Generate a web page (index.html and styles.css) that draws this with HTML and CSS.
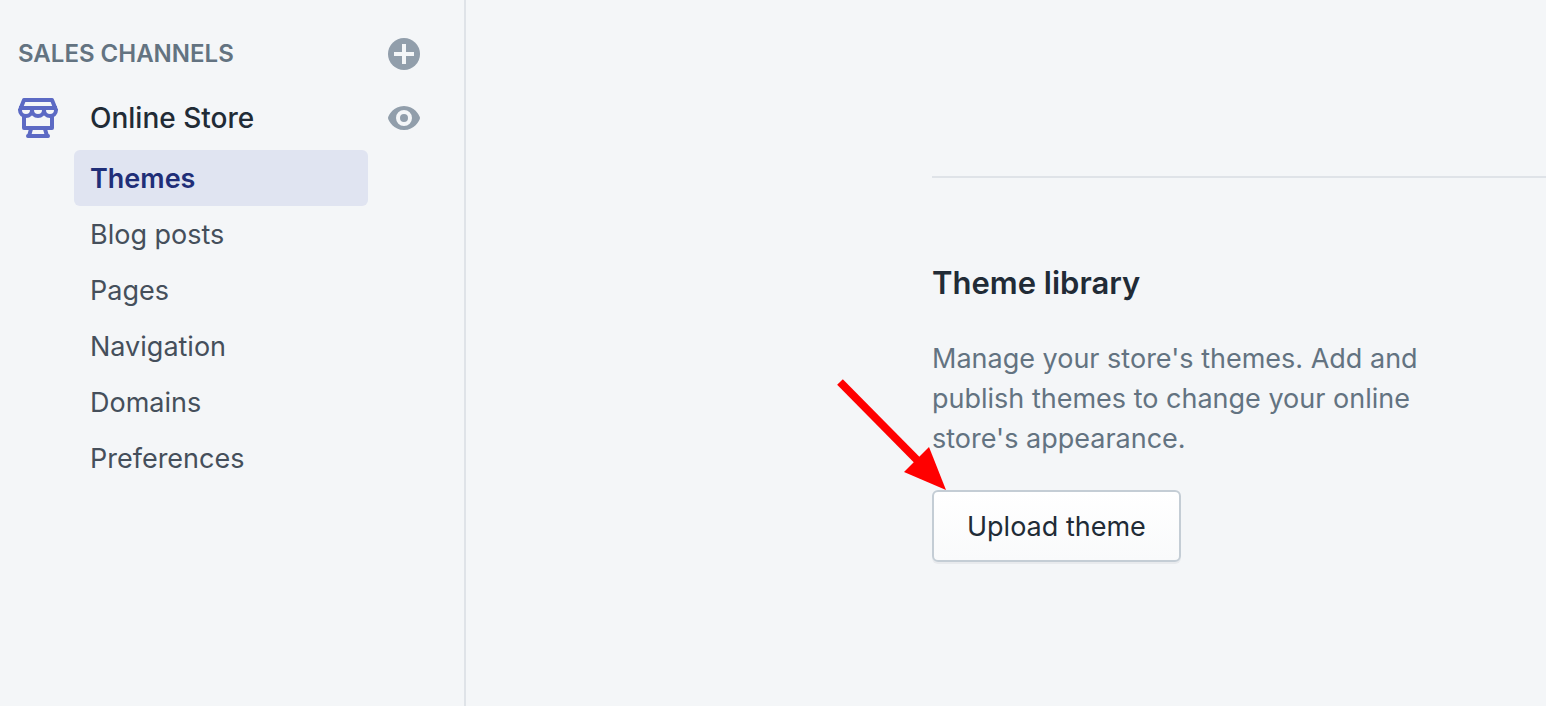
FILE: index.html
```html
<!DOCTYPE html>
<html lang="en">
<head>
  <meta charset="utf-8">
  <meta name="viewport" content="width=device-width, initial-scale=1">
  <title>Themes</title>
  <link rel="stylesheet" href="styles.css">
</head>
<body>
  <div class="app">
    <nav class="sidebar" aria-label="Sales channels">
      <div class="sidebar-header">
        <h2 class="sidebar-title">SALES CHANNELS</h2>
        <button class="icon-button" type="button" aria-label="Add sales channel">
          <svg width="32" height="32" viewBox="0 0 32 32" aria-hidden="true">
            <circle cx="16" cy="16" r="16" fill="#919eab"/>
            <path d="M16 6v20M6 16h20" stroke="#f4f6f8" stroke-width="4"/>
          </svg>
        </button>
      </div>
      <div class="channel">
        <a class="channel-link" href="#store">
          <svg width="40" height="40" viewBox="0 0 40 40" fill="none" stroke="#5c6ac4" stroke-width="4" aria-hidden="true">
            <path d="M2 12 6 2h28l4 10" stroke-linejoin="round"/>
            <path d="M1 10h38"/>
            <path d="M2 11v1a6 6 0 0 0 12 0v-1M14 11v1a6 6 0 0 0 12 0v-1M26 11v1a6 6 0 0 0 12 0v-1"/>
            <path d="M6 17v13h28V17" stroke-linejoin="round"/>
            <path d="M13 31l-2 7h18l-2-7" stroke-linejoin="round"/>
            <path d="M10 38h20" stroke-linecap="round"/>
          </svg>
          <span>Online Store</span>
        </a>
        <button class="icon-button" type="button" aria-label="View online store">
          <svg width="32" height="24" viewBox="0 0 32 24" aria-hidden="true">
            <path d="M16 0C5.500 0 .7 9.400.3 10.800a3 3 0 0 0 0 2.400C.7 14.600 5.500 24 16 24s15.300-9.400 15.700-10.800a3 3 0 0 0 0-2.400C31.300 9.400 26.500 0 16 0Z" fill="#919eab"/>
            <circle cx="16" cy="12" r="6" fill="none" stroke="#f4f6f8" stroke-width="4"/>
          </svg>
        </button>
      </div>
      <ul class="subnav">
        <li><a class="subnav-link is-active" href="#themes" aria-current="page">Themes</a></li>
        <li><a class="subnav-link" href="#blog-posts">Blog posts</a></li>
        <li><a class="subnav-link" href="#pages">Pages</a></li>
        <li><a class="subnav-link" href="#navigation">Navigation</a></li>
        <li><a class="subnav-link" href="#domains">Domains</a></li>
        <li><a class="subnav-link" href="#preferences">Preferences</a></li>
      </ul>
    </nav>
    <main class="content">
      <section class="library">
        <h1 class="library-title">Theme library</h1>
        <p class="library-text">Manage your store's themes. Add and publish themes to change your online store's appearance.</p>
        <div class="upload">
          <button class="upload-button" type="button">Upload theme</button>
          <svg class="arrow" width="112" height="112" viewBox="0 0 112 112" fill="#f00" aria-hidden="true">
            <path d="M6 4 85 84" stroke="#f00" stroke-width="8"/>
            <path d="M112 112 95 69 70 94Z"/>
          </svg>
        </div>
      </section>
    </main>
  </div>
</body>
</html>
```
FILE: styles.css
```css
* {
  box-sizing: border-box;
}

body {
  margin: 0;
  background: #f4f6f8;
  color: #212b36;
  font-family: Inter, "Liberation Sans", sans-serif;
  font-size: 27px;
  line-height: 40px;
}

h1,
h2,
p,
ul {
  margin: 0;
  padding: 0;
}

a {
  color: inherit;
  text-decoration: none;
}

.app {
  display: flex;
  min-height: 100vh;
}

.sidebar {
  flex: none;
  width: 466px;
  padding: 34px 44px 34px 18px;
  border-right: 2px solid #dfe3e8;
}

.sidebar-header,
.channel {
  display: flex;
  align-items: center;
  justify-content: space-between;
}

.sidebar-title {
  color: #637381;
  font-size: 24px;
  font-weight: 600;
}

.icon-button {
  display: flex;
  padding: 0;
  border: 0;
  background: none;
  cursor: pointer;
}

.channel {
  margin: 24px 0 12px;
}

.channel-link {
  display: flex;
  gap: 32px;
  font-size: 28px;
  font-weight: 500;
}

.subnav {
  margin: 0 52px 0 56px;
  list-style: none;
}

.subnav-link {
  display: block;
  padding: 9px 16px 7px;
  border-radius: 6px;
  color: #454f5b;
}

.subnav-link.is-active {
  background: #e0e4f1;
  color: #202e78;
  font-weight: 600;
}

.content {
  flex: 1;
  padding: 176px 0 0 466px;
}

.library {
  padding-top: 83px;
  border-top: 2px solid #dfe3e8;
}

.library-title {
  font-size: 31px;
  font-weight: 600;
  line-height: 44px;
}

.library-text {
  max-width: 520px;
  margin: 34px 0 31px;
  color: #637381;
}

.upload {
  position: relative;
  width: fit-content;
}

.upload-button {
  display: block;
  padding: 15px 33px 13px;
  border: 2px solid #c4cdd5;
  border-radius: 6px;
  background: linear-gradient(#fff, #f9fafb);
  box-shadow: 0 2px 0 rgba(22, 29, 37, 0.05);
  color: #212b36;
  font: inherit;
  cursor: pointer;
}

.arrow {
  position: absolute;
  right: calc(100% - 14px);
  bottom: 100%;
  pointer-events: none;
}
```
